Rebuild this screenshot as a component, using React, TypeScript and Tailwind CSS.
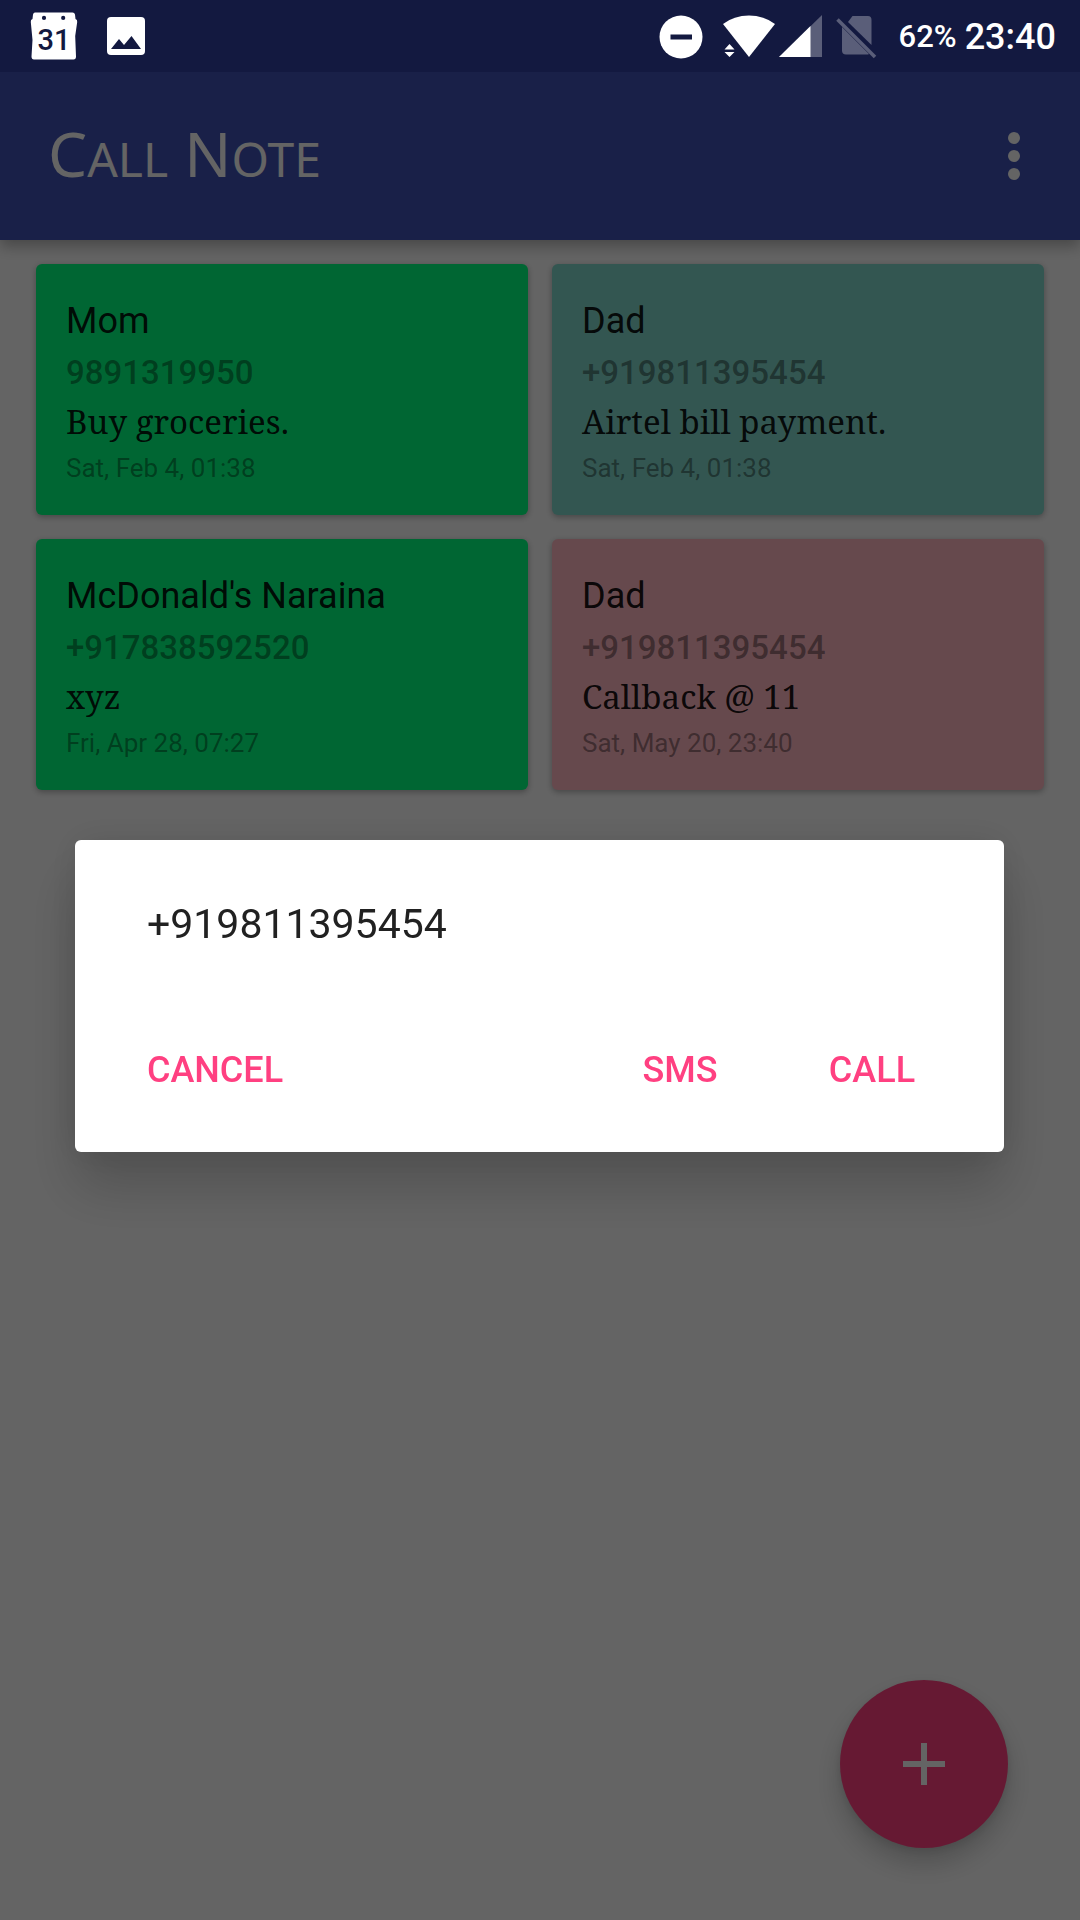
type Note = {
  name: string;
  phone: string;
  text: string;
  date: string;
  tone: string;
};

const notes: Note[] = [
  { name: "Mom", phone: "9891319950", text: "Buy groceries.", date: "Sat, Feb 4, 01:38", tone: "bg-[#00ff7f]" },
  { name: "Dad", phone: "+919811395454", text: "Airtel bill payment.", date: "Sat, Feb 4, 01:38", tone: "bg-[#80d6cb]" },
  { name: "McDonald's Naraina", phone: "+917838592520", text: "xyz", date: "Fri, Apr 28, 07:27", tone: "bg-[#00ff7f]" },
  { name: "Dad", phone: "+919811395454", text: "Callback @ 11", date: "Sat, May 20, 23:40", tone: "bg-[#ffb6c1]" },
];

function CalendarIcon() {
  return (
    <svg width="48" height="48" viewBox="0 0 48 48" aria-label="Calendar">
      <path
        fillRule="evenodd"
        fill="#fff"
        d="M5 0.5H42.500Q44.500 0.500 45 2.500L45.500 7Q47.500 7.500 47.200 10L45.200 24L46 44.500Q46 47.500 43.500 47.500H4Q1.500 47.500 1.500 44.500L2.500 28L0.800 10Q0.500 7.500 2.500 7L3 2.500Q3.500 0.500 5 0.500ZM14 3.800a2.100 2.100 0 1 0 0 4.200a2.100 2.100 0 1 0 0-4.200ZM33.200 3.800a2.100 2.100 0 1 0 0 4.200a2.100 2.100 0 1 0 0-4.200Z"
      />
      <text x="24" y="38" textAnchor="middle" fill="#131940" fontSize="29" fontWeight="500" className="font-['Roboto',sans-serif]">
        31
      </text>
    </svg>
  );
}

function PictureIcon() {
  return (
    <svg width="38" height="38" viewBox="0 0 38 38" aria-label="Screenshot saved">
      <rect width="38" height="38" rx="4" fill="#fff" />
      <path d="M4 32L12 22L17 28L24.500 19L34 32Z" fill="#131940" />
    </svg>
  );
}

function DoNotDisturbIcon() {
  return (
    <svg width="44" height="44" viewBox="0 0 44 44" aria-label="Do not disturb">
      <circle cx="22" cy="22" r="21.500" fill="#fff" />
      <rect x="11.500" y="19.500" width="21.500" height="5" fill="#131940" />
    </svg>
  );
}

function WifiIcon() {
  return (
    <svg width="52" height="44" viewBox="0 0 52 44" aria-label="Wi-Fi">
      <path d="M26 42L0 9Q11 0.500 26 0.500T52 9Z" fill="#fff" />
      <path d="M6.500 29L11.500 34.500H1.500ZM1.500 37H11.500L6.500 42Z" fill="#fff" />
    </svg>
  );
}

function SignalIcon() {
  return (
    <svg width="43" height="44" viewBox="0 0 43 44" aria-label="Mobile signal">
      <path d="M0 42L43 0V42Z" fill="#5a5e79" />
      <path d="M0 42L31.500 11V42Z" fill="#fff" />
    </svg>
  );
}

function NoSimIcon() {
  return (
    <svg width="41" height="44" viewBox="0 0 41 44" aria-label="No SIM">
      <path d="M16.500 1H32Q35.500 1 35.500 5V30L12 7Z" fill="#5a5e79" />
      <path d="M6 12L33 39Q32 39.500 31 39.500H10Q6 39.500 6 35.500Z" fill="#5a5e79" />
      <path d="M1.500 4.500L39 42" stroke="#5a5e79" strokeWidth="3.500" />
    </svg>
  );
}

function StatusBar() {
  return (
    <div className="relative z-20 flex h-18 items-center justify-between bg-[#131940] pr-6 pl-[30px] text-white">
      <div className="flex items-center gap-[29px]">
        <CalendarIcon />
        <PictureIcon />
      </div>
      <div className="flex items-center pt-0.5">
        <DoNotDisturbIcon />
        <div className="ml-5 flex items-center gap-1">
          <WifiIcon />
          <SignalIcon />
        </div>
        <div className="mr-1 ml-3.5">
          <NoSimIcon />
        </div>
        <span className="ml-4.5 text-[31px] leading-10 font-medium">62%</span>
        <span className="ml-2 text-[36px] leading-10 font-medium">23:40</span>
      </div>
    </div>
  );
}

function AppBar() {
  return (
    <header className="relative flex h-42 items-center justify-between bg-[#3f51b5] pr-9 pl-12 text-[#fafafa] shadow-[0_6px_14px_rgba(0,0,0,0.3)]">
      <h1 className="font-['Noto_Sans',sans-serif] text-[62px] leading-18">
        C<span className="text-[48px] uppercase">all</span> N<span className="text-[48px] uppercase">ote</span>
      </h1>
      <button type="button" aria-label="More options" className="flex size-15 items-center justify-center">
        <svg width="12" height="48" viewBox="0 0 12 48" fill="currentColor">
          <circle cx="6" cy="6" r="6" />
          <circle cx="6" cy="24" r="6" />
          <circle cx="6" cy="42" r="6" />
        </svg>
      </button>
    </header>
  );
}

function NoteCard({ note }: { note: Note }) {
  return (
    <article className={`rounded-md px-[30px] pt-[30px] pb-6 shadow-[0_2px_6px_rgba(0,0,0,0.3)] ${note.tone}`}>
      <h2 className="text-[36px] leading-[54px] text-black/90">{note.name}</h2>
      <p className="text-[33px] leading-[50px] font-medium text-black/40">{note.phone}</p>
      <p className="font-['Noto_Serif','DejaVu_Serif',serif] text-[33px] leading-12 text-black/90">{note.text}</p>
      <p className="text-[26px] leading-[45px] text-black/40">{note.date}</p>
    </article>
  );
}

function CallDialog() {
  return (
    <div className="fixed inset-x-0 top-18 bottom-0 z-10 flex items-center pr-[76px] pl-[75px]">
      <div
        role="dialog"
        aria-labelledby="dialog-title"
        className="w-full rounded-md bg-white pt-14 pb-7 shadow-[0_36px_54px_rgba(0,0,0,0.18),0_0_36px_rgba(0,0,0,0.1)]"
      >
        <h2 id="dialog-title" className="px-18 text-[41px] leading-14 text-[#212121]">
          +919811395454
        </h2>
        <div className="mt-16 flex pr-9 pl-11 text-[36px] font-medium text-[#ff4081]">
          <button type="button" className="mr-auto h-27 w-48">CANCEL</button>
          <button type="button" className="h-27 w-48">SMS</button>
          <button type="button" className="h-27 w-48">CALL</button>
        </div>
      </div>
    </div>
  );
}

export default function App() {
  return (
    <div className="min-h-screen bg-[#fafafa] font-['Roboto',sans-serif]">
      <StatusBar />
      <AppBar />
      <main className="grid grid-cols-2 gap-6 px-9 pt-6">
        {notes.map((note, i) => (
          <NoteCard key={i} note={note} />
        ))}
      </main>
      <button
        type="button"
        aria-label="Add note"
        className="fixed right-18 bottom-18 flex size-42 items-center justify-center rounded-full bg-[#ff4081] text-[#fafafa] shadow-[0_15px_27px_rgba(0,0,0,0.2),0_3px_9px_rgba(0,0,0,0.1)]"
      >
        <svg width="42" height="42" viewBox="0 0 42 42" fill="currentColor">
          <path d="M18 0H24V18H42V24H24V42H18V24H0V18H18Z" />
        </svg>
      </button>
      <div className="fixed inset-0 z-10 bg-black/60" />
      <CallDialog />
    </div>
  );
}
